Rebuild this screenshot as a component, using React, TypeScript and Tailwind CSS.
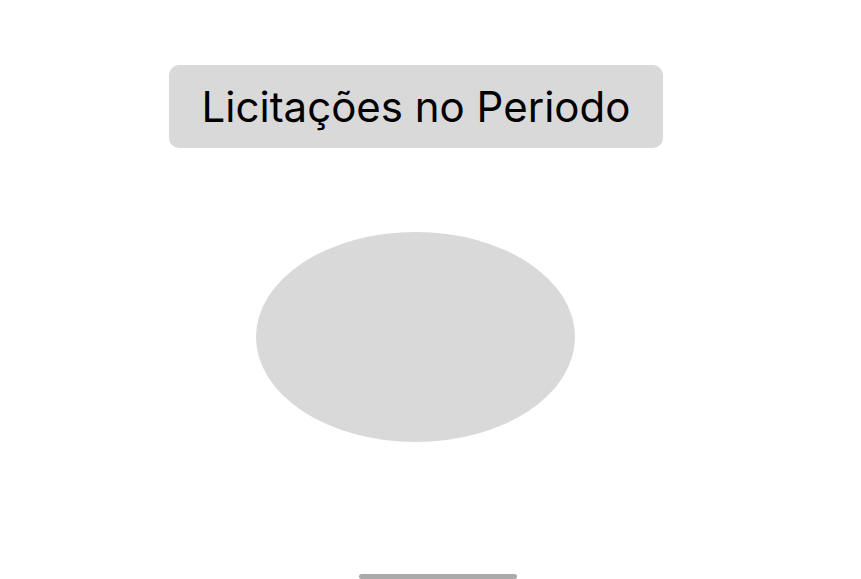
export default function App() {
  return (
    <div className="flex h-[579px] w-full flex-col bg-white overflow-hidden" style={{ fontFamily: "Inter, 'Noto Sans', sans-serif" }}>
      <div className="ml-[169px] mt-[65px] flex h-[83px] w-[494px] items-center justify-center rounded-[10px] bg-[#d9d9d9]">
        <span className="text-[42px] font-normal leading-none text-black">Licitações no Periodo</span>
      </div>
      <div className="ml-[256px] mt-[84px] h-[210px] w-[319px] rounded-[50%] bg-[#d9d9d9]" />
      <div className="mt-auto ml-[359px] h-[5px] w-[158px] rounded-full bg-[#aaaaaa]" />
    </div>
  );
}
